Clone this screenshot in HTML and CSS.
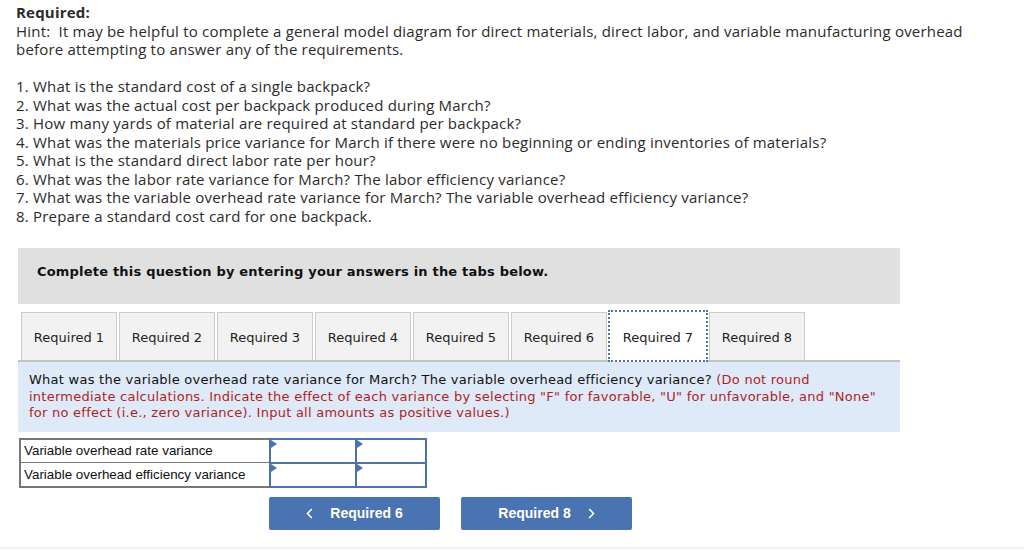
FILE: index.html
```html
<!DOCTYPE html>
<html>
<head>
<meta charset="utf-8">
<link rel="stylesheet" href="styles.css">
</head>
<body>
<div class="page">
  <div class="intro">
    <div class="req-title">Required:</div>
    <div>Hint:&nbsp; It may be helpful to complete a general model diagram for direct materials, direct labor, and variable manufacturing overhead before attempting to answer any of the requirements.</div>
    <div class="blank">&nbsp;</div>
    <div>1. What is the standard cost of a single backpack?</div>
    <div>2. What was the actual cost per backpack produced during March?</div>
    <div>3. How many yards of material are required at standard per backpack?</div>
    <div>4. What was the materials price variance for March if there were no beginning or ending inventories of materials?</div>
    <div>5. What is the standard direct labor rate per hour?</div>
    <div>6. What was the labor rate variance for March? The labor efficiency variance?</div>
    <div>7. What was the variable overhead rate variance for March? The variable overhead efficiency variance?</div>
    <div>8. Prepare a standard cost card for one backpack.</div>
  </div>

  <div class="question">
    <div class="complete">Complete this question by entering your answers in the tabs below.</div>

    <div class="tabs">
      <div class="tab">Required 1</div>
      <div class="tab">Required 2</div>
      <div class="tab">Required 3</div>
      <div class="tab">Required 4</div>
      <div class="tab">Required 5</div>
      <div class="tab">Required 6</div>
      <div class="tab active">Required 7</div>
      <div class="tab">Required 8</div>
    </div>

    <div class="instructions">
      What was the variable overhead rate variance for March? The variable overhead efficiency variance? <span class="red">(Do not round intermediate calculations. Indicate the effect of each variance by selecting "F" for favorable, "U" for unfavorable, and "None" for no effect (i.e., zero variance). Input all amounts as positive values.)</span>
    </div>

    <table class="answers">
      <tr>
        <td class="label">Variable overhead rate variance</td>
        <td class="input wide"><span class="flag"></span></td>
        <td class="input narrow"><span class="flag"></span></td>
      </tr>
      <tr>
        <td class="label">Variable overhead efficiency variance</td>
        <td class="input wide"><span class="flag"></span></td>
        <td class="input narrow"><span class="flag"></span></td>
      </tr>
    </table>

    <div class="nav">
      <div class="btn">
        <svg class="chev" width="7" height="11" viewBox="0 0 7 11"><path d="M5.8 1 L1.5 5.5 L5.8 10" fill="none" stroke="#fff" stroke-width="1.6"/></svg>
        <span>Required 6</span>
      </div>
      <div class="btn">
        <span>Required 8</span>
        <svg class="chev" width="7" height="11" viewBox="0 0 7 11"><path d="M1.2 1 L5.5 5.5 L1.2 10" fill="none" stroke="#fff" stroke-width="1.6"/></svg>
      </div>
    </div>
  </div>
</div>
<div class="footer-line"></div>
</body>
</html>
```

FILE: styles.css
```css
html, body {
  margin: 0;
  padding: 0;
  background: #ffffff;
}

.page {
  padding: 3px 0 0 16px;
}

.intro {
  font-family: "Open Sans", "Lato", sans-serif;
  font-size: 15px;
  letter-spacing: 0.2px;
  line-height: 18.5px;
  color: #2b2b2b;
  width: 980px;
}

.req-title {
  font-weight: bold;
}

.question {
  margin-left: 2px;
  width: 882px;
  margin-top: 23px;
}

.complete {
  background: #e0e0e0;
  height: 56px;
  box-sizing: border-box;
  padding: 16px 0 0 19px;
  font-family: "DejaVu Sans", Verdana, sans-serif;
  font-weight: bold;
  font-size: 13px;
  letter-spacing: 0.2px;
  line-height: 16px;
  color: #111;
}

.tabs {
  display: flex;
  gap: 2px;
  margin-top: 8px;
  padding-left: 3px;
  border-bottom: 2px solid #c3c3c3;
  height: 48px;
  align-items: flex-end;
}

.tab {
  width: 96px;
  height: 48px;
  box-sizing: border-box;
  background: #f2f2f2;
  border: 1px solid #cccccc;
  border-bottom: none;
  display: flex;
  align-items: center;
  justify-content: center;
  padding-top: 2px;
  font-family: "DejaVu Sans", Verdana, sans-serif;
  font-size: 13px;
  color: #222;
}

.tab.active {
  background: #ffffff;
  border: 2px dotted #4a73b0;
  height: 52px;
  width: 100px;
  margin: 0 -1px -2px -1px;
  position: relative;
}

.instructions {
  background: #deeaf7;
  padding: 10px 18px 10px 11px;
  font-family: "DejaVu Sans", Verdana, sans-serif;
  font-size: 13px;
  letter-spacing: 0.25px;
  line-height: 16.5px;
  color: #111;
}

.red {
  color: #b11f1f;
}

.answers {
  margin-top: 6px;
  margin-left: 1px;
  border-collapse: collapse;
  border: 2px solid #777;
}

.answers td {
  height: 22px;
  padding: 0;
  border: 1px solid #777;
}

.answers td.label {
  width: 245px;
  padding-left: 3px;
  font-family: "Liberation Sans", Arial, sans-serif;
  font-size: 13.4px;
  color: #111;
}

.answers td.input {
  position: relative;
  border: 2px solid #4a73b0;
  background: #fff;
}

.answers td.wide {
  width: 84px;
}

.answers td.narrow {
  width: 68px;
}

.flag {
  position: absolute;
  left: 0;
  top: 0;
  width: 0;
  height: 0;
  border-top: 4px solid transparent;
  border-bottom: 4px solid transparent;
  border-left: 6px solid #4a73b0;
}

.nav {
  display: flex;
  gap: 21px;
  margin-top: 9px;
  padding-left: 251px;
}

.btn {
  width: 171px;
  height: 33px;
  background: #4a73b1;
  border-radius: 2px;
  color: #fff;
  font-family: "Liberation Sans", Arial, sans-serif;
  font-weight: bold;
  font-size: 14px;
  display: flex;
  align-items: center;
  justify-content: center;
  gap: 17px;
}

.chev {
  display: block;
}

.footer-line {
  margin-top: 17px;
  height: 2px;
  background: #f0f0f0;
}
```
